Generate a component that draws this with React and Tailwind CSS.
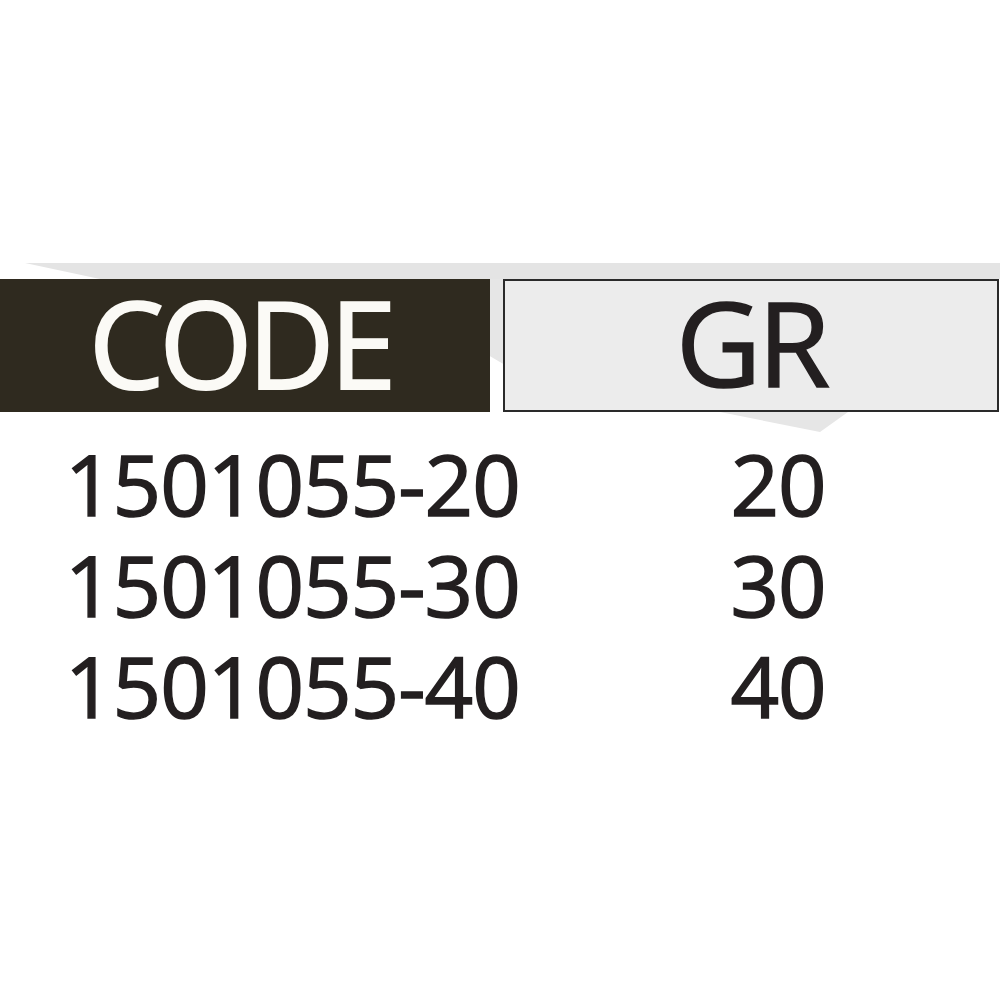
import React from 'react'

const rows = [
    { code: '1501055-20', gr: '20' },
    { code: '1501055-30', gr: '30' },
    { code: '1501055-40', gr: '40' },
]

const App = () => {
    return (
        <div
            className="relative w-[1000px] h-[1000px] bg-white text-[#231f20] overflow-hidden"
            style={{ fontFamily: '"Open Sans", "Noto Sans", sans-serif' }}
        >
            {/* soft shadow behind the header */}
            <svg className="absolute inset-0" width="1000" height="1000" viewBox="0 0 1000 1000">
                <polygon points="25,263 1000,263 1000,279 100,279" fill="#e4e4e4" />
                <polygon points="488,279 505,279 505,365 488,355" fill="#e6e6e6" />
                <polygon points="720,412 848,412 820,432" fill="#e6e6e6" />
            </svg>

            <div className="relative pt-[279px]">
                <div className="flex gap-[13px] h-[133px]">
                    <div className="w-[490px] bg-[#2f2a1f] flex items-center justify-center pr-[10px] pb-[6px]">
                        <span className="text-[120px] leading-none text-[#fbfaf6] tracking-[-5px] [-webkit-text-stroke:2px_#fbfaf6]">CODE</span>
                    </div>
                    <div className="w-[496px] bg-[#ececec] border-2 border-[#2a2a2a] flex items-center justify-center pb-[8px]">
                        <span className="text-[118px] leading-none tracking-[-4px] [-webkit-text-stroke:1.5px_#231f20]">GR</span>
                    </div>
                </div>

                <div className="mt-[21px]">
                    {rows.map((r) => (
                        <div key={r.code} className="flex h-[101px] items-center">
                            <div className="w-[680px] pl-[65px] text-[85px] leading-[101px] tracking-[-1px] [-webkit-text-stroke:1.5px_#231f20]">{r.code}</div>
                            <div className="w-[196px] text-center text-[85px] leading-[101px] tracking-[-1px] [-webkit-text-stroke:1.5px_#231f20]">{r.gr}</div>
                        </div>
                    ))}
                </div>
            </div>
        </div>
    )
}

export default App
